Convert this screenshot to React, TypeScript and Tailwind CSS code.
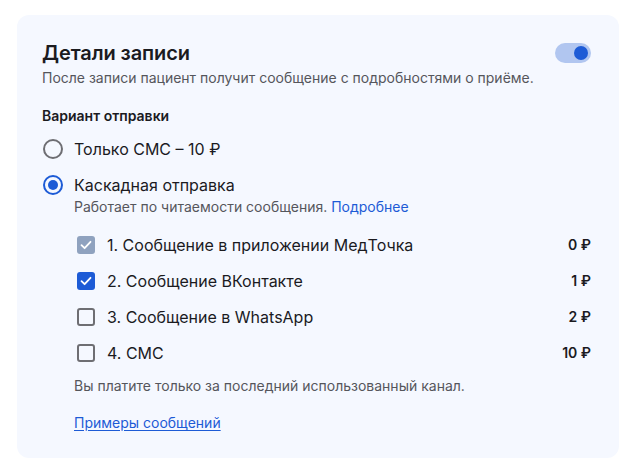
import React from "react";

const font = { fontFamily: "Inter, 'Noto Sans', sans-serif" };

function Check() {
  return (
    <svg width="12" height="10" viewBox="0 0 12 10" fill="none">
      <path d="M1.5 5.2 L4.6 8.2 L10.5 1.8" stroke="white" strokeWidth="1.8" strokeLinecap="round" strokeLinejoin="round" />
    </svg>
  );
}

function Box({ state }: { state: "locked" | "on" | "off" }) {
  if (state === "locked")
    return (
      <span className="ml-[3px] w-[18px] h-[18px] rounded-[3px] bg-[#8fa2bf] flex items-center justify-center shrink-0">
        <Check />
      </span>
    );
  if (state === "on")
    return (
      <span className="ml-[3px] w-[18px] h-[18px] rounded-[3px] bg-[#1d5bd6] flex items-center justify-center shrink-0">
        <Check />
      </span>
    );
  return <span className="ml-[3px] w-[18px] h-[18px] rounded-[3px] border-2 border-[#6e6e73] shrink-0" />;
}

function Radio({ on }: { on: boolean }) {
  return on ? (
    <span className="w-[20px] h-[20px] rounded-full border-2 border-[#1d5bd6] flex items-center justify-center shrink-0">
      <span className="w-[10px] h-[10px] rounded-full bg-[#1d5bd6]" />
    </span>
  ) : (
    <span className="w-[20px] h-[20px] rounded-full border-2 border-[#6e6e73] shrink-0" />
  );
}

const channels: { label: string; price: string; state: "locked" | "on" | "off" }[] = [
  { label: "1. Сообщение в приложении МедТочка", price: "0 ₽", state: "locked" },
  { label: "2. Сообщение ВКонтакте", price: "1 ₽", state: "on" },
  { label: "3. Сообщение в WhatsApp", price: "2 ₽", state: "off" },
  { label: "4. СМС", price: "10 ₽", state: "off" },
];

export default function App() {
  return (
    <div className="w-[631px] h-[473px] bg-white pt-[15px] pl-[17px]" style={font}>
      <div className="w-[602px] h-[443px] rounded-[12px] bg-[#f5f8ff] pt-[24px] pl-[25px] pr-[28px] flex flex-col">
        <div className="flex items-center justify-between">
          <h1 className="text-[20px] leading-[28px] font-semibold text-[#1b1b1f] tracking-[-0.1px]">Детали записи</h1>
          <span className="w-[36px] h-[20px] rounded-full bg-[#b1c6f0] flex items-center justify-end pr-[3px]">
            <span className="w-[14px] h-[14px] rounded-full bg-[#1d5bd6]" />
          </span>
        </div>
        <p className="mt-[1px] text-[14px] leading-[20px] text-[#55565c]">
          После записи пациент получит сообщение с подробностями о приёме.
        </p>

        <div className="mt-[18px] text-[14px] leading-[20px] font-semibold text-[#1b1b1f]">Вариант отправки</div>

        <div className="mt-[11px] flex items-center gap-[11px] h-[24px] pl-[1px]">
          <Radio on={false} />
          <span className="text-[16px] leading-[24px] text-[#1b1b1f]">Только СМС – 10 ₽</span>
        </div>

        <div className="mt-[12px] flex items-center gap-[11px] h-[24px] pl-[1px]">
          <Radio on />
          <span className="text-[16px] leading-[24px] text-[#1b1b1f]">Каскадная отправка</span>
        </div>
        <p className="pl-[32px] text-[14px] leading-[20px] text-[#55565c]">
          Работает по читаемости сообщения. <span className="text-[#1d5bd6]">Подробнее</span>
        </p>

        <div className="mt-[16px] pl-[32px] flex flex-col gap-[12px]">
          {channels.map((c) => (
            <div key={c.label} className="flex items-center h-[24px]">
              <Box state={c.state} />
              <span className="ml-[12px] flex-1 text-[16px] leading-[24px] text-[#1b1b1f]">{c.label}</span>
              <span className="text-[14px] leading-[20px] font-semibold text-[#1b1b1f]">{c.price}</span>
            </div>
          ))}
        </div>

        <p className="mt-[11px] pl-[32px] text-[14px] leading-[20px] text-[#55565c]">
          Вы платите только за последний использованный канал.
        </p>
        <a className="mt-[17px] ml-[32px] self-start text-[14px] leading-[20px] text-[#1d5bd6] underline underline-offset-2">
          Примеры сообщений
        </a>
      </div>
    </div>
  );
}
